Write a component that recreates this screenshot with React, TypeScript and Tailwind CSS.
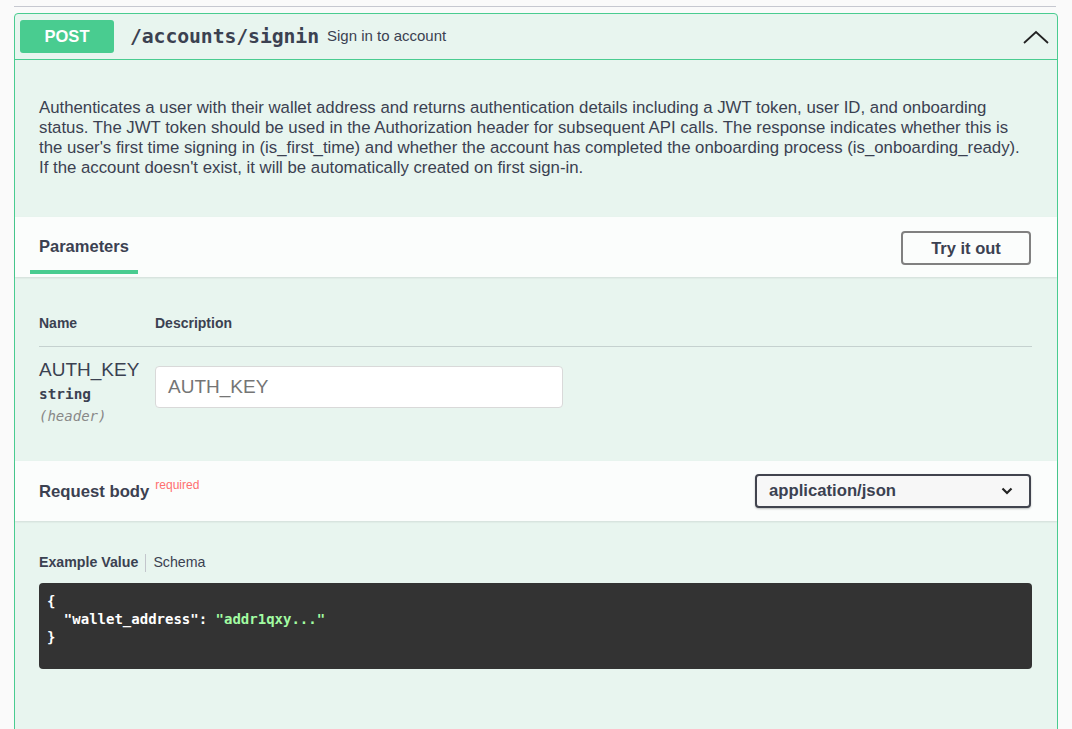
import React from "react";

const sans = { fontFamily: '"Liberation Sans", Arial, sans-serif' };
const mono = { fontFamily: '"DejaVu Sans Mono", "Liberation Mono", monospace' };

const description = [
  "Authenticates a user with their wallet address and returns authentication details including a JWT token, user ID, and onboarding",
  "status. The JWT token should be used in the Authorization header for subsequent API calls. The response indicates whether this is",
  "the user's first time signing in (is_first_time) and whether the account has completed the onboarding process (is_onboarding_ready).",
  "If the account doesn't exist, it will be automatically created on first sign-in.",
];

function ChevronUp() {
  return (
    <svg width="26" height="14" viewBox="0 0 26 14" fill="none">
      <polyline points="1,13 13,2 25,13" stroke="#222" strokeWidth="1.8" />
    </svg>
  );
}

function ChevronDown() {
  return (
    <svg width="12" height="8" viewBox="0 0 12 8" fill="none">
      <polyline points="1.5,1.5 6,6 10.5,1.5" stroke="#222" strokeWidth="2.2" />
    </svg>
  );
}

export default function App() {
  return (
    <div className="min-h-screen bg-[#fafafa] text-[#3b4151] px-[14px] pt-[6px] overflow-hidden" style={sans}>
      <div className="h-px bg-[#c6c8d0] mr-[2px]" />
      <div className="mt-[6px] border border-[#49cc90] rounded-[4px] bg-[#e8f5ef] min-h-[740px]">
        {/* header */}
        <div className="flex items-center h-[46px] border-b border-[#49cc90] pl-[5px] pr-[8px]">
          <div className="w-[94px] h-[33px] rounded-[3px] bg-[#49cc90] text-white font-bold text-[16.5px] flex items-center justify-center">
            POST
          </div>
          <span className="ml-[16px] font-bold text-[19.8px] tracking-[-0.1px]" style={mono}>
            /accounts/signin
          </span>
          <span className="ml-[8px] text-[15px]">Sign in to account</span>
          <div className="ml-auto mt-[1px]">
            <ChevronUp />
          </div>
        </div>

        {/* description */}
        <div className="pl-[24px] pr-[10px] pt-[38px] pb-[39px] text-[16.8px] leading-[20px]">
          {description.map((line) => (
            <div key={line} className="whitespace-nowrap">
              {line}
            </div>
          ))}
        </div>

        {/* parameters header */}
        <div className="h-[60px] bg-[#fbfdfc] shadow-[0_1px_2px_rgba(0,0,0,0.1)] flex items-center pl-[15px] pr-[26px]">
          <div className="h-full flex flex-col">
            <div className="flex-1 flex items-center px-[9px] pt-[8px] font-bold text-[16.5px]">Parameters</div>
            <div className="h-[4px] bg-[#49cc90] mb-[3px] mt-[2px]" />
          </div>
          <button className="ml-auto mt-[2px] w-[130px] h-[34px] border-2 border-[#808080] rounded-[4px] font-bold text-[16.5px] text-[#3b4151] bg-transparent">
            Try it out
          </button>
        </div>

        {/* parameters table */}
        <div className="px-[24px] pt-[36px] pb-[34px] pr-[25px]">
          <div className="flex font-bold text-[14px] pb-[12px] border-b border-[#3b415133]">
            <div className="w-[116px]">Name</div>
            <div>Description</div>
          </div>
          <div className="flex pt-[12px]">
            <div className="w-[116px]">
              <div className="text-[19px] leading-[22px]">AUTH_KEY</div>
              <div className="font-bold text-[14.4px] leading-[22px] mt-[2px]" style={mono}>string</div>
              <div className="italic text-[14px] leading-[22px] text-[#888]" style={mono}>(header)</div>
            </div>
            <div className="mt-[7px] w-[408px] h-[42px] bg-white border border-[#d9d9d9] rounded-[4px] flex items-center px-[12px] text-[19px] text-[#757575]">
              AUTH_KEY
            </div>
          </div>
        </div>

        {/* request body header */}
        <div className="h-[60px] bg-[#fbfdfc] shadow-[0_1px_2px_rgba(0,0,0,0.1)] flex items-center pl-[24px] pr-[26px]">
          <div className="font-bold text-[16.7px] flex items-start">
            <span className="pt-[2px]">Request body</span>
            <span className="ml-[6px] text-[12px] text-[#ff6f6f] font-normal -mt-[1px]">required</span>
          </div>
          <div className="ml-auto w-[276px] h-[34px] border-2 border-[#41444e] rounded-[4px] bg-[#f7f7f7] flex items-center pl-[12px] pr-[16px] font-bold text-[16.7px] shadow-[0_1px_2px_rgba(0,0,0,0.25)]">
            application/json
            <span className="ml-auto">
              <ChevronDown />
            </span>
          </div>
        </div>

        {/* example */}
        <div className="pl-[24px] pr-[25px] pt-[31px]">
          <div className="flex items-center text-[14.2px]">
            <span className="font-bold">Example Value</span>
            <span className="mx-[7px] w-px h-[18px] bg-[#c3c6cc]" />
            <span>Schema</span>
          </div>
          <div
            className="mt-[10px] h-[86px] bg-[#333333] rounded-[4px] px-[8px] pt-[9px] text-white text-[14px] leading-[18px] font-semibold whitespace-pre"
            style={mono}
          >
            <div>{"{"}</div>
            <div>
              {'  "wallet_address": '}
              <span className="text-[#a2fca2]">"addr1qxy..."</span>
            </div>
            <div>{"}"}</div>
          </div>
        </div>
      </div>
    </div>
  );
}
